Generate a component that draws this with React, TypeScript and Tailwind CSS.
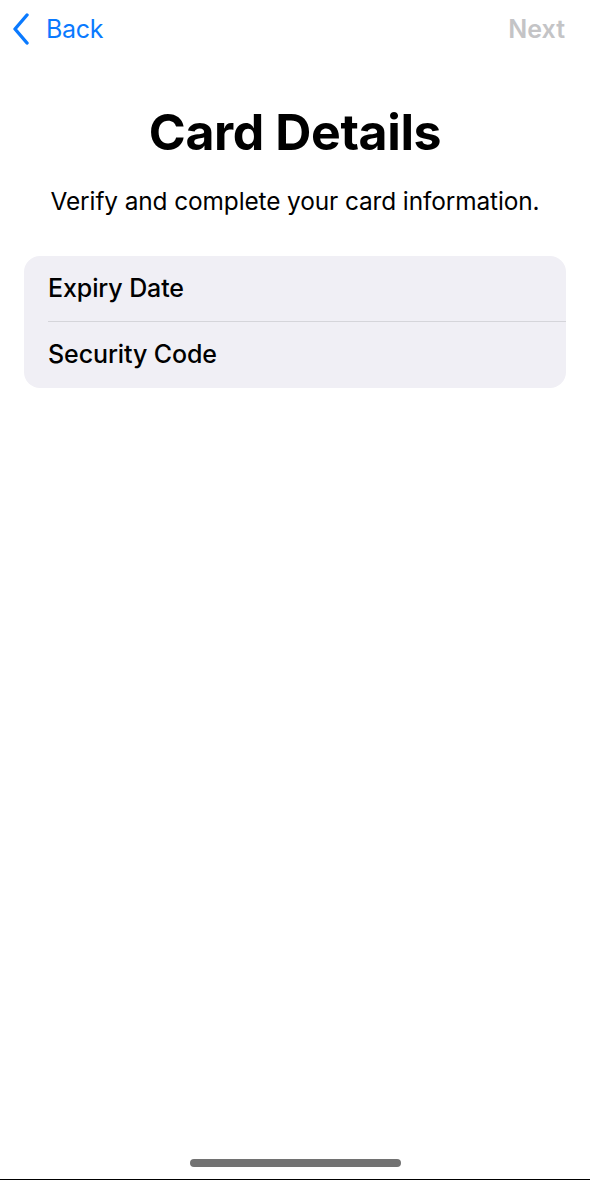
import React from "react";

const rows = ["Expiry Date", "Security Code"];

const App: React.FC = () => {
  return (
    <div
      className="relative h-[1180px] w-[590px] overflow-hidden bg-white flex flex-col"
      style={{ fontFamily: "Inter, 'Noto Sans', sans-serif" }}
    >
      {/* nav bar */}
      <div className="flex h-[58px] items-center justify-between pl-[12px] pr-[25px]">
        <button className="flex items-center gap-[16px] text-[#0a7aff]">
          <svg width="18" height="32" viewBox="0 0 18 32" fill="none">
            <path
              d="M15 2 L3 16 L15 30"
              stroke="#0a7aff"
              strokeWidth="3.4"
              strokeLinecap="round"
              strokeLinejoin="round"
            />
          </svg>
          <span className="text-[25px] leading-none tracking-[-0.3px]">Back</span>
        </button>
        <span className="text-[25px] font-semibold leading-none text-[#c4c4c6]">Next</span>
      </div>

      {/* heading */}
      <h1 className="mt-[45px] text-center text-[50px] font-bold leading-[58px] tracking-[-0.4px] text-black">
        Card Details
      </h1>
      <p className="mt-[24px] text-center text-[24.4px] leading-[32px] text-black tracking-[-0.1px]">
        Verify and complete your card information.
      </p>

      {/* form group */}
      <div className="mx-[24px] mt-[39px] overflow-hidden rounded-[16px] bg-[#f0eff5]">
        {rows.map((label, i) => (
          <div key={label} className="pl-[24px]">
            <div
              className={
                "flex h-[66px] items-center text-[25px] font-medium tracking-[-0.1px] text-black " +
                (i < rows.length - 1 ? "border-b border-[#d5d5da]" : "")
              }
            >
              {label}
            </div>
          </div>
        ))}
      </div>

      <div className="flex-1" />

      {/* home indicator */}
      <div className="mb-[12px] flex justify-center">
        <div className="h-[8px] w-[211px] rounded-full bg-[#727272]" />
      </div>
      <div className="h-[1px] bg-black" />
    </div>
  );
};

export default App;
